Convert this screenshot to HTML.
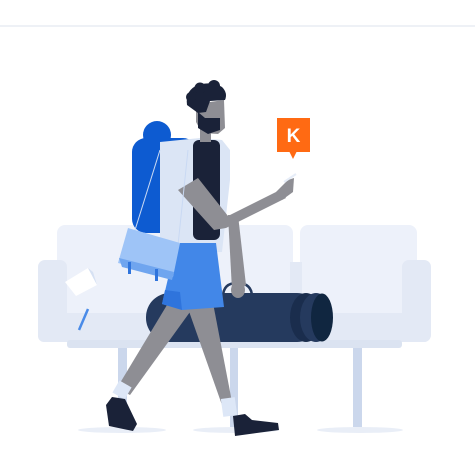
<!DOCTYPE html>
<html><head><meta charset="utf-8"><style>
html,body{margin:0;padding:0;background:#fff;width:475px;height:457px;overflow:hidden}
svg{display:block}
</style></head><body>
<svg width="475" height="457" viewBox="0 0 475 457" xmlns="http://www.w3.org/2000/svg">
<rect x="0" y="25" width="475" height="2" fill="#eef1f6"/>
<ellipse cx="122" cy="430" rx="44" ry="3" fill="#e9eef7"/>
<ellipse cx="236" cy="430" rx="43" ry="3" fill="#e9eef7"/>
<ellipse cx="360" cy="430" rx="43" ry="3" fill="#e9eef7"/>
<rect x="118" y="345" width="9" height="82" fill="#cbd7ec"/>
<rect x="230" y="345" width="8" height="82" fill="#cbd7ec"/>
<rect x="353" y="345" width="9" height="82" fill="#cbd7ec"/>
<rect x="57" y="225" width="236" height="100" rx="8" fill="#edf1fa"/>
<rect x="300" y="225" width="117" height="100" rx="8" fill="#edf1fa"/>
<rect x="290" y="262" width="12" height="60" fill="#e3e9f5"/>
<rect x="38" y="313" width="392" height="29" rx="6" fill="#e3e9f5"/>
<rect x="67" y="340" width="335" height="8" rx="3" fill="#dbe3f1"/>
<rect x="38" y="260" width="29" height="82" rx="7" fill="#e3e9f5"/>
<rect x="402" y="260" width="29" height="82" rx="7" fill="#e3e9f5"/>
<polygon points="65,282 88,268 97,285 76,296" fill="#fff"/>
<polygon points="88,268 93,272 97,285" fill="#d6e1f3"/>
<line x1="88" y1="309" x2="79" y2="330" stroke="#4a8be8" stroke-width="2.5"/>
<rect x="146" y="293" width="175" height="49" rx="24" fill="#253a5e"/>
<ellipse cx="306" cy="317.5" rx="16" ry="24.5" fill="#1a2d4d"/>
<ellipse cx="316" cy="317.5" rx="16" ry="24.5" fill="#253a5e"/>
<ellipse cx="322" cy="317.5" rx="11" ry="24" fill="#102640"/>
<path d="M223 297 Q223 283 237 283 Q252 283 252 297" fill="none" stroke="#253a5e" stroke-width="2.5"/>
<polygon points="228,215 238,215 246,285 238,292 232,290" fill="#8e8e94"/>
<ellipse cx="238" cy="290" rx="7" ry="8" fill="#8e8e94"/>
<polygon points="185,300 213,303 232,402 222,405" fill="#8e8e94"/>
<rect x="222" y="398" width="14" height="18" fill="#dde7f7" transform="rotate(-8 229 407)"/>
<polygon points="233,416 245,414 252,420 278,423 279,430 235,436" fill="#1a2238"/>
<polygon points="170,300 195,305 130,395 117,388" fill="#8e8e94"/>
<rect x="115" y="383" width="14" height="14" fill="#dde7f7" transform="rotate(30 122 390)"/>
<polygon points="112,397 125,399 137,424 133,431 109,426 106,405" fill="#1a2238"/>
<circle cx="157" cy="135" r="14" fill="#0d5bd1"/>
<rect x="132" y="138" width="65" height="95" rx="14" fill="#0d5bd1"/>
<path d="M170 215 Q185 205 198 198" stroke="#0a4bb0" stroke-width="5" fill="none"/>
<polygon points="160,142 200,138 222,140 230,150 230,180 222,252 160,254" fill="#dbe5f5"/>
<rect x="193" y="140" width="27" height="100" rx="6" fill="#1a2238"/>
<rect x="200" y="122" width="11" height="20" fill="#8e8e94"/>
<path d="M196 104 L224 100 L225 128 L218 134 L202 133 L196 122 Z" fill="#8e8e94"/>
<path d="M198 112 L205 118 L220 118 L220 130 L208 134 L198 128 Z" fill="#1a2238"/>
<path d="M187 105 Q185 90 198 85 Q212 81 222 87 Q228 93 225 100 L210 101 L206 112 L198 113 Z" fill="#1a2238"/>
<circle cx="191" cy="97" r="5" fill="#1a2238"/>
<circle cx="200" cy="88" r="5.5" fill="#1a2238"/>
<circle cx="214" cy="86" r="6" fill="#1a2238"/>
<polygon points="180,243 216,243 224,307 182,310 162,304 170,270" fill="#4287e8"/>
<polygon points="165,290 180,292 182,310 162,304" fill="#2f74dc"/>
<polygon points="178,190 198,178 228,216 280,190 286,198 226,228 214,230" fill="#8e8e94"/>
<path d="M276 192 L288 180 L294 178 L293 192 L282 200 Z" fill="#8e8e94"/>
<line x1="284" y1="182" x2="296" y2="174" stroke="#e6edf8" stroke-width="2"/>
<line x1="160" y1="150" x2="135" y2="230" stroke="#c9d9f3" stroke-width="1"/>
<line x1="188" y1="150" x2="178" y2="245" stroke="#c9d9f3" stroke-width="1"/>
<polygon points="128,228 180,243 173,277 118,263" fill="#9ec4f7"/>
<polygon points="119,258 174,272 172,280 122,267" fill="#6fa5ef"/>
<rect x="128" y="262" width="3" height="12" fill="#2f74dc"/>
<rect x="155" y="269" width="3" height="12" fill="#2f74dc"/>
<rect x="277" y="118" width="33" height="34" fill="#ff6a13"/>
<polygon points="289,151 297,151 293,159" fill="#ff6a13"/>
<text x="293.5" y="142" font-family="Liberation Sans, sans-serif" font-weight="bold" font-size="19" fill="#fff" text-anchor="middle">K</text>
</svg>
</body></html>
